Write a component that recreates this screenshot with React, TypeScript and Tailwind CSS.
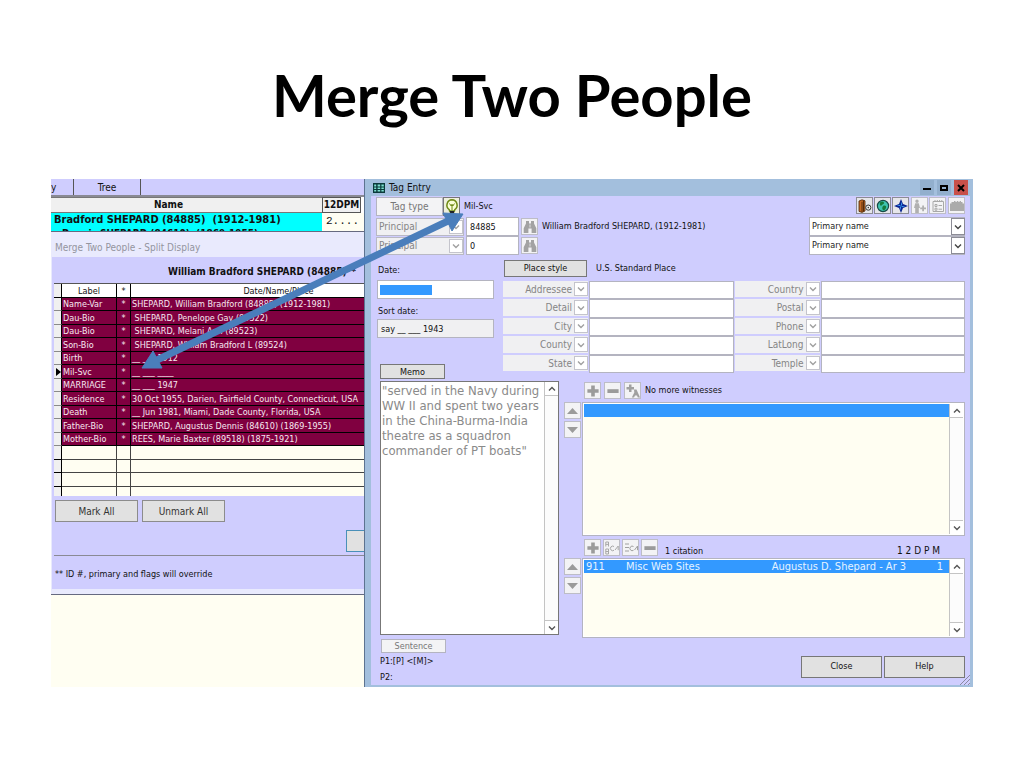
import React from "react";

const events: [string, string][] = [
  ["Name-Var", "SHEPARD, William Bradford (84885) (1912-1981)"],
  ["Dau-Bio", "\u00a0SHEPARD, Penelope Gay (89522)"],
  ["Dau-Bio", "\u00a0SHEPARD, Melani Ann (89523)"],
  ["Son-Bio", "\u00a0SHEPARD, William Bradford L (89524)"],
  ["Birth", "__ ___ 1912"],
  ["Mil-Svc", "__ ___ ____"],
  ["MARRIAGE", "__ ___ 1947"],
  ["Residence", "30 Oct 1955, Darien, Fairfield County, Connecticut, USA"],
  ["Death", "__ Jun 1981, Miami, Dade County, Florida, USA"],
  ["Father-Bio", "SHEPARD, Augustus Dennis (84610) (1869-1955)"],
  ["Mother-Bio", "REES, Marie Baxter (89518) (1875-1921)"],
];

const placeRows: [string, string][] = [
  ["Addressee", "Country"],
  ["Detail", "Postal"],
  ["City", "Phone"],
  ["County", "LatLong"],
  ["State", "Temple"],
];

const memo = `"served in the Navy during
WW II and spent two years
in the China-Burma-India
theatre as a squadron
commander of PT boats"`;

function Chevron({ up, className = "" }: { up?: boolean; className?: string }) {
  return (
    <svg viewBox="0 0 8 8" className={`size-2 ${className}`} fill="none" stroke="currentColor" strokeWidth="1.4" aria-hidden="true">
      <path d={up ? "M1 5.5 4 2.5 7 5.5" : "M1 2.5 4 5.5 7 2.5"} />
    </svg>
  );
}

function Combo({ label, options, muted, right }: { label: string; options: string[]; muted?: boolean; right?: boolean }) {
  return (
    <div className={`grid h-full w-full ${muted ? "text-[10px] text-[#858585]" : "text-[#1c1c1c]"}`}>
      <select
        aria-label={label}
        className={`col-start-1 row-start-1 h-full w-full min-w-0 appearance-none rounded-none outline-none ${
          muted ? "bg-[#f0f0f2]" : "border border-[#b4b4c0] bg-white"
        } ${right ? "pr-4 text-right" : "pl-[2px] pr-4"}`}
      >
        {options.map((o) => (
          <option key={o}>{o}</option>
        ))}
      </select>
      <span
        className={`pointer-events-none col-start-1 row-start-1 my-px flex w-[14px] items-center justify-center justify-self-end border bg-white ${
          muted ? "border-[#c4c4cc] text-[#a0a0a0]" : "border-[#8c8c96] text-[#444]"
        }`}
      >
        <Chevron />
      </span>
    </div>
  );
}

function ScrollBar() {
  return (
    <div className="flex w-[14px] shrink-0 flex-col justify-between border-l border-[#c4c4c4] bg-[#fcfcfc] text-[#555]">
      <button type="button" aria-label="Scroll up" className="flex h-[14px] items-center justify-center border-b border-[#c4c4c4] bg-white">
        <Chevron up />
      </button>
      <button type="button" aria-label="Scroll down" className="flex h-[14px] items-center justify-center border-t border-[#c4c4c4] bg-white">
        <Chevron />
      </button>
    </div>
  );
}

function Tool({ label, active, children }: { label: string; active?: boolean; children: React.ReactNode }) {
  return (
    <button
      type="button"
      aria-label={label}
      className={`flex size-[17px] shrink-0 items-center justify-center border ${
        active ? "border-[#8c8c94] bg-[#e6e6ea]" : "border-[#bdbdc6] bg-[#f3f3f5]"
      }`}
    >
      {children}
    </button>
  );
}

function Plus() {
  return (
    <svg viewBox="0 0 12 12" className="size-3" fill="#9b9b9b" aria-hidden="true">
      <path d="M4.2.4h3.600v3.800h3.800v3.600H7.800v3.800H4.200V7.800H.4V4.200h3.800z" />
    </svg>
  );
}

function Minus() {
  return (
    <svg viewBox="0 0 12 12" className="size-3" fill="#9b9b9b" aria-hidden="true">
      <path d="M.4 4.200h11.200v3.800H.4z" />
    </svg>
  );
}

function Binoculars() {
  return (
    <svg viewBox="0 0 14 14" className="size-[14px]" fill="#a3a3a3" aria-hidden="true">
      <path d="M3 1h3v2.500h2V1h3v2.600l2.300 4.600V13H8.600V8.500H5.400V13H.7V8.200L3 3.600z" />
      <path d="M6.600 4.500h.8v3h-.8z" fill="#eee" />
    </svg>
  );
}

function MoveButtons() {
  return (
    <div className="flex w-[18px] shrink-0 flex-col gap-[2px]">
      <Tool label="Move up">
        <svg viewBox="0 0 11 6" className="h-[6px] w-[11px]" fill="#9b9b9b" aria-hidden="true"><path d="M0 6 5.5 0 11 6z" /></svg>
      </Tool>
      <Tool label="Move down">
        <svg viewBox="0 0 11 6" className="h-[6px] w-[11px]" fill="#9b9b9b" aria-hidden="true"><path d="M0 0h11L5.5 6z" /></svg>
      </Tool>
    </div>
  );
}

function BackgroundPane() {
  return (
    <section className="flex w-[313px] shrink-0 flex-col overflow-hidden whitespace-nowrap bg-[#fffef2]">
      <nav className="flex h-[16px] bg-[#cfcdfe] text-[10px] leading-[18px]">
        <a href="#family" className="w-[23px] border-r border-[#555]">y</a>
        <a href="#tree" className="w-[67px] border-r border-[#555] text-center">Tree</a>
      </nav>
      <table className="w-full table-fixed border-separate border-spacing-0 border-t-2 border-[#8a8a94]">
        <thead className="bg-[#f0f0f0] text-[10px] leading-[14px]">
          <tr>
            <th className="border-y border-[#777] pr-9">Name</th>
            <th className="w-[39px] border border-[#555]">12DPM</th>
            <th className="w-[3px] bg-white" />
          </tr>
        </thead>
        <tbody>
          <tr>
            <td className="bg-[#00ffff] p-0 pl-[3px]">
              <div className="h-[18px] overflow-hidden text-[11px] font-bold leading-[14px]">
                <div>Bradford SHEPARD (84885)&nbsp; (1912-1981)</div>
                <div className="pl-2 text-[10px]">Dennis SHEPARD (84610)&nbsp; (1869-1955)</div>
              </div>
            </td>
            <td className="p-0 pl-1 align-top font-['Liberation_Mono',monospace] text-[11px] leading-4">2....</td>
            <td />
          </tr>
        </tbody>
      </table>

      <div className="border-b border-[#666a80] border-t bg-[#e9eafd] pb-[5px] pl-px">
        <h2 className="h-[25px] pl-[3px] text-[10px] leading-[31px] text-[#94959f]">Merge Two People - Split Display</h2>
        <div className="bg-[#cfcdfe] pl-[2px]">
          <h3 className="h-[26px] pl-[114px] text-[10px] font-bold leading-[30px]">William Bradford SHEPARD (84885)**</h3>
          <table className="w-full table-fixed border-separate border-spacing-0 border-t border-[#555] bg-[#fffef2] text-[9px] leading-[12px]">
            <thead className="bg-white">
              <tr className="h-[14px]">
                <th className="w-[8px] border-b border-r border-black bg-[#f0f0f0] p-0" />
                <th className="w-[55px] border-b border-r border-black p-0 font-normal">Label</th>
                <th className="w-[14px] border-b border-r border-black p-0 font-normal">*</th>
                <th className="border-b border-black p-0 pl-[62px] font-normal">Date/Name/Place</th>
              </tr>
            </thead>
            <tbody>
              {events.map(([label, detail], i) => (
                <tr key={i} className="bg-[#800040] text-[#f7e9f0] odd:h-[13px] even:h-[14px]">
                  <td className="border-b border-r border-b-[#8a8a8a] border-r-black bg-[#f0f0f0] p-0">
                    {label === "Mil-Svc" && (
                      <svg viewBox="0 0 6 8" className="ml-px h-2 w-[6px]" fill="#000" aria-hidden="true"><path d="M1 0 6 4 1 8z" /></svg>
                    )}
                  </td>
                  <td className="border-b border-r border-black p-0 pl-px">{label}</td>
                  <td className="border-b border-r border-black p-0 text-center">*</td>
                  <td className="border-b border-black p-0 pl-px">{detail}</td>
                </tr>
              ))}
              {[0, 1, 2].map((i) => (
                <tr key={i} className="odd:h-[13px] even:h-[14px]">
                  <td className="border-b border-r border-black bg-[#f0f0f0] p-0" />
                  <td className="border-b border-r border-[#444] p-0" />
                  <td className="border-b border-r border-[#444] p-0" />
                  <td className="border-b border-[#444] p-0" />
                </tr>
              ))}
              <tr className="h-[9px]">
                <td className="border-r border-black bg-[#f0f0f0] p-0" />
                <td className="border-r border-[#444] p-0" />
                <td className="border-r border-[#444] p-0" />
                <td className="p-0" />
              </tr>
            </tbody>
          </table>
          <div className="flex gap-1 pl-px pt-1 text-[10px]">
            <button type="button" className="h-[22px] w-[83px] border border-[#8c8c8c] bg-[#e1e1e1] text-[#333]">Mark All</button>
            <button type="button" className="h-[22px] w-[83px] border border-[#8c8c8c] bg-[#e1e1e1] text-[#333]">Unmark All</button>
          </div>
          <div className="flex justify-end pb-[3px] pt-2">
            <button type="button" aria-label="Merge" className="h-[22px] w-[18px] border border-r-0 border-[#4a90b8] bg-[#e1e1e1]" />
          </div>
          <p className="h-[34px] border-t border-[#8a8a94] pl-px text-[9px] leading-[37px]">** ID #, primary and flags will override</p>
        </div>
      </div>
    </section>
  );
}

function WindowBar() {
  return (
    <header className="flex h-[17px] items-center gap-1 px-[2px] text-[10px]">
      <svg viewBox="0 0 12 10" className="h-[10px] w-3" aria-hidden="true">
        <path d="M0 0h12v10H0z" fill="#0a3a3a" />
        <path d="M1.2 1.5h2v2h-2zm3.4 0h2.6v2H4.6zm3.8 0h2.4v2H8.4zM1.2 4.4h2v1.5h-2zm3.4 0h2.6v1.5H4.6zm3.8 0h2.4v1.5H8.4zM1.2 7h2v1.6h-2zm3.4 0h2.6v1.6H4.6zm3.8 0h2.4v1.6H8.4z" fill="#7fe0d0" />
      </svg>
      <h2>Tag Entry</h2>
      <div className="ml-auto flex h-[15px] gap-[3px]">
        <button type="button" aria-label="Minimize" className="flex w-[14px] items-center justify-center bg-[#92afcd]">
          <svg viewBox="0 0 8 8" className="size-2" aria-hidden="true"><path d="M0 4h8v2H0z" /></svg>
        </button>
        <button type="button" aria-label="Maximize" className="flex w-[14px] items-center justify-center bg-[#92afcd]">
          <svg viewBox="0 0 8 8" className="size-2" aria-hidden="true"><path d="M0 1h8v6H0zM2 3v2h4V3z" fillRule="evenodd" /></svg>
        </button>
        <button type="button" aria-label="Close window" className="flex w-[14px] items-center justify-center bg-[#c8504a]">
          <svg viewBox="0 0 8 8" className="size-2" stroke="#000" strokeWidth="2" aria-hidden="true"><path d="M1 1 7 7M7 1 1 7" /></svg>
        </button>
      </div>
    </header>
  );
}

function Toolbar() {
  return (
    <div className="ml-auto flex gap-px self-start">
      <Tool label="Exit" active>
        <svg viewBox="0 0 14 14" className="size-[14px]" aria-hidden="true">
          <path d="M1 2 4 .8l3 1V12l-3 1.400-3-1z" fill="#c46a26" stroke="#4a2408" strokeWidth=".8" />
          <path d="M4 2.800v10M5.500 1.500v11" stroke="#4a2408" strokeWidth=".9" />
          <circle cx="10.300" cy="8.600" r="2.600" fill="#eee" stroke="#333" strokeWidth="1" />
          <circle cx="10.300" cy="8.600" r=".8" fill="#333" />
        </svg>
      </Tool>
      <Tool label="Globe" active>
        <svg viewBox="0 0 14 14" className="size-[14px]" aria-hidden="true">
          <circle cx="7" cy="7" r="5.600" fill="#3fc4b0" stroke="#174a48" strokeWidth="1.200" />
          <path d="M4 3.500c2-1.500 3-1 4 0S6 5.500 5.500 6.500 3 6 4 3.500zM7 7c2-1 4 0 3 2s-2 2.500-3 2S6 8 7 7z" fill="#157a3c" />
        </svg>
      </Tool>
      <Tool label="Compass" active>
        <svg viewBox="0 0 14 14" className="size-[14px]" aria-hidden="true">
          <path d="M7 0 9 5 14 7 9 9 7 14 5 9 0 7 5 5z" fill="#0a2390" />
          <path d="M7 2.500V7l1.300-1.300zM2.500 7H7L5.700 5.700zM7 11.500V7L5.700 8.300zM11.500 7H7l1.300 1.300z" fill="#3a98f0" />
        </svg>
      </Tool>
      <span className="w-0" />
      <Tool label="Add person">
        <svg viewBox="0 0 14 14" className="size-[14px]" fill="#b0b0b0" aria-hidden="true">
          <path d="M4 .5a1.700 1.700 0 1 1 0 3.400 1.700 1.700 0 0 1 0-3.400zM2.200 4.200h3.600L7 9H5.800v5H2.200V9H1zM9.200 6.500h1.800v2h2v1.800h-2v2H9.200v-2h-2V8.500h2z" />
        </svg>
      </Tool>
      <Tool label="Checklist">
        <svg viewBox="0 0 14 14" className="size-[14px]" fill="none" stroke="#a8a8a8" aria-hidden="true">
          <path d="M2 2.500h10.500v10H2zM4 1v2M6.300 1v2M8.600 1v2M10.800 1v2M4 5.500h2v2H4zM4 9.200h2v2H4zM7.500 6.500h3.500M7.500 10.200h3.500" />
        </svg>
      </Tool>
      <span className="w-0" />
      <Tool label="Camera">
        <svg viewBox="0 0 14 14" className="size-[14px]" fill="#ababab" aria-hidden="true">
          <path d="M0 4.500h1.500V3H4V2h1.500v1h1.300V2h1.500v1h1.300V2H11v1h1.500v1.500H14V12H0z" />
        </svg>
      </Tool>
    </div>
  );
}

function PrincipalRow({ id, name, index }: { id: string; name?: string; index: number }) {
  return (
    <div className="flex h-[19px] items-center">
      <div className="h-[18px] w-[88px] border border-[#b9b9c4]">
        <Combo label={`Role ${index}`} options={["Principal"]} muted />
      </div>
      <input aria-label={`Person ID ${index}`} defaultValue={id} className="ml-[2px] h-[19px] w-[53px] border border-[#b4b4c0] bg-white px-[3px] outline-none" />
      <div className="ml-[2px] mr-1 flex"><Tool label={`Find person ${index}`}><Binoculars /></Tool></div>
      <span>{name}</span>
      <div className="ml-auto h-[19px] w-[156px]">
        <Combo label={`Name used ${index}`} options={["Primary name"]} />
      </div>
    </div>
  );
}

function TagEntry() {
  return (
    <section className="flex min-w-0 flex-1 flex-col whitespace-nowrap border-l border-[#5d7390] bg-[#a3bfdd] pb-[2px] pl-[6px] pr-[3px] text-[9px]">
      <WindowBar />
      <div className="relative flex flex-1 flex-col bg-[#cfcdfe] pl-[5px] pr-[5px] pt-px">
        <div className="flex h-[19px] items-center">
          <button type="button" className="h-[19px] w-[67px] border border-[#b4b4c0] bg-[#f3f3f5] text-[10px] text-[#777]">Tag type</button>
          <button type="button" aria-label="Tag hint" className="flex h-[19px] w-[17px] items-center justify-center border border-[#777] bg-[#eef0dc]">
            <svg viewBox="0 0 14 16" className="h-4 w-[14px]" aria-hidden="true">
              <path d="M7 .8a5.400 5.400 0 0 1 2.800 9.800L9.400 12H4.600l-.4-1.400A5.400 5.400 0 0 1 7 .8z" fill="#fbffd8" stroke="#6f8a14" strokeWidth="1.500" />
              <path d="M4.500 4.500 6.200 7 7 5.200 7.800 7l1.700-2.500M7 6v5" fill="none" stroke="#6f8a14" />
              <path d="M4.800 12h4.400v2.500L7 15.800 4.800 14.500z" fill="#222" />
            </svg>
          </button>
          <span className="pl-1">Mil-Svc</span>
          <Toolbar />
        </div>
        <div className="flex flex-col pt-px">
          <PrincipalRow index={1} id="84885" name="William Bradford SHEPARD, (1912-1981)" />
          <PrincipalRow index={2} id="0" />
        </div>

        <div className="mt-[5px] grid flex-1 grid-cols-[127px_61px_minmax(0,1fr)] grid-rows-[104px_14px_1fr]">
          <div className="flex w-[118px] flex-col pl-px">
            <label htmlFor="event-date" className="h-5 pl-px leading-5">Date:</label>
            <div className="flex h-[19px] items-center border border-[#b4b4c0] bg-white px-[2px]">
              <input id="event-date" aria-label="Date" defaultValue="" className="h-[10px] w-[52px] bg-[#3399ff] outline-none" />
            </div>
            <label htmlFor="sort-date" className="h-5 pl-px leading-[24px]">Sort date:</label>
            <input id="sort-date" defaultValue="say __ ___ 1943" className="h-[19px] border border-[#b4b4c0] bg-[#f0f0f2] px-[3px] leading-4 outline-none" />
          </div>

          <div className="col-span-2 row-span-2">
            <div className="flex items-center gap-[9px] pb-1 pl-px">
              <button type="button" className="h-[17px] w-[83px] border border-[#777] bg-[#e1e1e1]">Place style</button>
              <span>U.S. Standard Place</span>
            </div>
            <div className="grid grid-cols-[85px_minmax(0,1fr)_85px_minmax(0,1fr)] gap-x-px">
              {placeRows.map((row, i) => (
                <div key={i} className="col-span-4 grid grid-cols-subgrid odd:h-[18px] even:h-[19px]">
                  {row.map((name) => (
                    <React.Fragment key={name}>
                      <div className="pb-[2px]"><Combo label={`${name} field`} options={[name]} muted right /></div>
                      <input aria-label={name} className="h-full min-w-0 border border-[#b4b4c0] bg-white px-1 outline-none" />
                    </React.Fragment>
                  ))}
                </div>
              ))}
            </div>
          </div>

          <div className="col-start-1 row-start-2 pl-1">
            <button type="button" className="block h-[15px] w-[65px] border border-[#777] bg-[#e1e1e1] leading-3">Memo</button>
          </div>

          <div className="col-span-2 row-start-3 flex flex-col pl-1 pr-[5px] pt-[3px]">
            <div className="flex h-[254px] border border-[#777] bg-white">
              <textarea aria-label="Memo" defaultValue={memo} className="min-w-0 flex-1 resize-none overflow-hidden whitespace-pre pl-px pt-px text-[13px] leading-[15px] text-[#8a8a8a] outline-none" />
              <ScrollBar />
            </div>
            <button type="button" className="ml-px mt-1 h-[14px] w-[65px] border border-[#b4b4c0] bg-[#f3f3f5] leading-3 text-[#777]">Sentence</button>
            <div className="leading-4">
              <p>P1:[P] &lt;[M]&gt;</p>
              <p>P2:</p>
            </div>
          </div>

          <div className="col-start-3 row-start-3 flex flex-col">
            <div className="flex h-6 items-center gap-[3px] pl-[20px] pt-px">
              <Tool label="Add witness"><Plus /></Tool>
              <Tool label="Remove witness"><Minus /></Tool>
              <Tool label="Add all witnesses">
                <svg viewBox="0 0 14 14" className="size-[14px]" fill="#a0a0a0" aria-hidden="true">
                  <path d="M3 .5h2.500V3H8v2.500H5.500V8H3V5.500H.5V3H3z" />
                  <path d="M8 5.500h2.500l3.500 8h-2.200l-.8-2H9l-1 2H5.800L8.300 8.500z" />
                </svg>
              </Tool>
              <span className="pl-px">No more witnesses</span>
            </div>
            <div className="flex">
              <MoveButtons />
              <div className="flex h-[134px] min-w-0 flex-1 border border-[#b4b4c0] bg-white p-px">
                <ul aria-label="Witnesses" className="min-w-0 flex-1 bg-[#fffef2]">
                  <li className="h-[13px] bg-[#3399ff]" />
                </ul>
                <ScrollBar />
              </div>
            </div>
            <div className="flex h-[22px] items-center gap-[2px] pl-[20px] pt-px">
              <Tool label="Add citation"><Plus /></Tool>
              <Tool label="Sort citations">
                <svg viewBox="0 0 14 14" className="size-[14px]" fill="none" stroke="#a8a8a8" aria-hidden="true">
                  <path d="M.8 5.500V1h2.700v4.500M.8 3.400h2.700M.8 8v5h2.700V8H.8M.8 10.500h2.700M9 5.500a2.300 2.300 0 1 0 0 3.800M10 9l3.200-4v4.200" />
                </svg>
              </Tool>
              <Tool label="Reorder citations">
                <svg viewBox="0 0 14 14" className="size-[14px]" fill="none" stroke="#a0a0a0" aria-hidden="true">
                  <path d="M1 3h4M1 6.500h4M1 10h4M9.500 5.500a2.300 2.300 0 1 0 0 3.800M10.500 9l3-4v4.200" />
                </svg>
              </Tool>
              <Tool label="Remove citation"><Minus /></Tool>
              <span className="self-end pl-[5px] leading-[14px]">1 citation</span>
              <span className="ml-auto self-end pr-[25px] text-[10px] leading-[14px]">1 2 D P M</span>
            </div>
            <div className="flex">
              <MoveButtons />
              <div className="flex h-[80px] min-w-0 flex-1 border border-[#b4b4c0] bg-white p-px">
                <ul aria-label="Citations" className="min-w-0 flex-1 bg-[#fffef2]">
                  <li className="flex h-[13px] bg-[#3399ff] pl-[2px] pr-[6px] text-[11px] leading-[13px] text-[#e6f3ff]">
                    <span className="w-10">911</span>
                    <span className="min-w-0 flex-1">Misc Web Sites</span>
                    <span>Augustus D. Shepard - Ar</span>
                    <span className="w-[40px] pl-[3px]">3</span>
                    <span>1</span>
                  </li>
                </ul>
                <ScrollBar />
              </div>
            </div>
            <div className="mt-[18px] flex justify-end gap-[2px]">
              <button type="button" className="h-[22px] w-[81px] border border-[#777] bg-[#e1e1e1]">Close</button>
              <button type="button" className="h-[22px] w-[81px] border border-[#777] bg-[#e1e1e1]">Help</button>
            </div>
          </div>
        </div>
        <svg viewBox="0 0 10 10" className="absolute bottom-0 right-0 size-[10px]" stroke="#8a8aa0" aria-hidden="true">
          <path d="M0 10 10 0M4 10l6-6M8 10l2-2" />
        </svg>
      </div>
    </section>
  );
}

export default function App() {
  return (
    <main className="min-h-screen bg-white px-[51px] pb-20 text-[#111] font-['DejaVu_Sans_Condensed','DejaVu_Sans',sans-serif]">
      <h1 className="h-[179px] pt-[59px] text-center font-['Lato',sans-serif] text-[58px] font-bold leading-[72px] text-black">Merge Two People</h1>
      <div className="relative flex">
        <BackgroundPane />
        <TagEntry />
        <svg viewBox="0 0 340 200" className="pointer-events-none absolute left-[81px] top-[21px] h-[200px] w-[340px]" aria-hidden="true">
          <path d="M24 160.500 316 21" stroke="#4a7ebb" strokeWidth="7" />
          <path d="M10 168 21 151 30 168z M331 14 311 13 320 31z" fill="#4a7ebb" stroke="#4a7ebb" />
        </svg>
      </div>
    </main>
  );
}
